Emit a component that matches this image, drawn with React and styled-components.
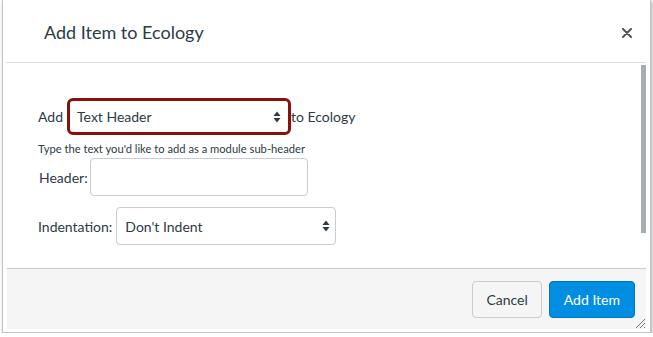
import React from 'react';
import styled, { createGlobalStyle } from 'styled-components';

const GlobalStyle = createGlobalStyle`
  body {
    margin: 0;
    background: #ffffff;
    font-family: Lato, "Open Sans", sans-serif;
    color: #2d3b45;
  }
`;

const Frame = styled.div`
  margin-left: 2px;
  width: 649px;
  height: 333px;
  box-sizing: border-box;
  border: 1px solid #c4c4c4;
  border-top: none;
  box-shadow: 1px 1px 3px rgba(0, 0, 0, 0.35);
  background: #ffffff;
  display: flex;
  flex-direction: column;
  padding: 0 4px 3px 3px;
`;

const Header = styled.div`
  height: 62px;
  display: flex;
  align-items: center;
  justify-content: space-between;
  padding: 0 14px 0 38px;
  flex-shrink: 0;
`;

const Title = styled.h1`
  margin: 0;
  font-size: 18px;
  font-weight: 400;
  color: #2d3b45;
  padding-top: 2px;
`;

const CloseButton = styled.button`
  border: none;
  background: none;
  padding: 0;
  display: flex;
  margin-top: 4px;
  cursor: pointer;
`;

const Body = styled.div`
  flex: 1;
  display: flex;
  border-top: 1px solid #dadddf;
`;

const Content = styled.div`
  flex: 1;
  padding: 35px 0 0 32px;
  font-size: 14px;
`;

const Track = styled.div`
  width: 5px;
  padding-top: 2px;
`;

const Thumb = styled.div`
  height: 168px;
  background: #a5adb3;
`;

const Row = styled.div`
  display: flex;
  align-items: center;
  gap: ${(p) => p.gap || 0}px;
  margin-top: ${(p) => p.top || 0}px;
`;

const Label = styled.span`
  font-size: 14px;
  padding-left: ${(p) => p.indent || 0}px;
`;

const Hint = styled.div`
  font-size: 11.2px;
  line-height: 13px;
  margin-top: 7px;
`;

const SelectBox = styled.div`
  box-sizing: border-box;
  width: ${(p) => p.width}px;
  height: ${(p) => p.height}px;
  display: flex;
  align-items: center;
  justify-content: space-between;
  border: ${(p) => (p.focused ? '3px solid #8a1010' : '1px solid #c7cdd1')};
  border-radius: ${(p) => (p.focused ? 6 : 4)}px;
  padding: ${(p) => (p.focused ? '0 7px 0 7px' : '0 5px 0 8px')};
  font-size: 14px;
  background: #ffffff;
`;

const TextInput = styled.div`
  box-sizing: border-box;
  width: 218px;
  height: 38px;
  border: 1px solid #c7cdd1;
  border-radius: 4px;
  background: #ffffff;
`;

const Footer = styled.div`
  height: 61px;
  box-sizing: border-box;
  margin-left: 1px;
  background: #f5f5f5;
  border-top: 1px solid #c7cdd1;
  display: flex;
  justify-content: flex-end;
  align-items: center;
  gap: 7px;
  padding: 1px 11px 0 0;
  position: relative;
  flex-shrink: 0;
`;

const Button = styled.button`
  box-sizing: border-box;
  height: 37px;
  padding: 0 ${(p) => (p.primary ? 14 : 13)}px;
  border-radius: 4px;
  font-family: Lato, "Open Sans", sans-serif;
  font-size: 14px;
  border: 1px solid ${(p) => (p.primary ? '#0077c0' : '#c7cdd1')};
  background: ${(p) => (p.primary ? '#008ee2' : '#f5f5f5')};
  color: ${(p) => (p.primary ? '#ffffff' : '#2d3b45')};
`;

const Grip = styled.svg`
  position: absolute;
  right: 0;
  bottom: 0;
`;

const Arrows = () => (
  <svg width="8" height="12" viewBox="0 0 8 12">
    <path d="M4 0.5 L7.5 5 L0.5 5 Z" fill="#2d3b45" />
    <path d="M4 11.5 L7.5 7 L0.5 7 Z" fill="#2d3b45" />
  </svg>
);

export default function App() {
  return (
    <>
      <GlobalStyle />
      <Frame>
        <Header>
          <Title>Add Item to Ecology</Title>
          <CloseButton aria-label="Close">
            <svg width="10" height="10" viewBox="0 0 10 10">
              <path d="M1 1 L9 9 M9 1 L1 9" stroke="#555" strokeWidth="2" strokeLinecap="round" />
            </svg>
          </CloseButton>
        </Header>
        <Body>
          <Content>
            <Row>
              <Label>Add</Label>
              <SelectBox focused width={224} height={37} style={{ marginLeft: 4 }}>
                <span>Text Header</span>
                <Arrows />
              </SelectBox>
              <Label>to Ecology</Label>
            </Row>
            <Hint>Type the text you'd like to add as a module sub-header</Hint>
            <Row gap={2} top={3}>
              <Label indent={1}>Header:</Label>
              <TextInput />
            </Row>
            <Row gap={4} top={11}>
              <Label>Indentation:</Label>
              <SelectBox width={220} height={38}>
                <span>Don't Indent</span>
                <Arrows />
              </SelectBox>
            </Row>
          </Content>
          <Track>
            <Thumb />
          </Track>
        </Body>
        <Footer>
          <Button>Cancel</Button>
          <Button primary>Add Item</Button>
          <Grip width="12" height="12" viewBox="0 0 12 12">
            <path d="M11 2 L2 11 M11 6 L6 11 M11 10 L10 11" stroke="#777" strokeWidth="1" />
          </Grip>
        </Footer>
      </Frame>
    </>
  );
}
